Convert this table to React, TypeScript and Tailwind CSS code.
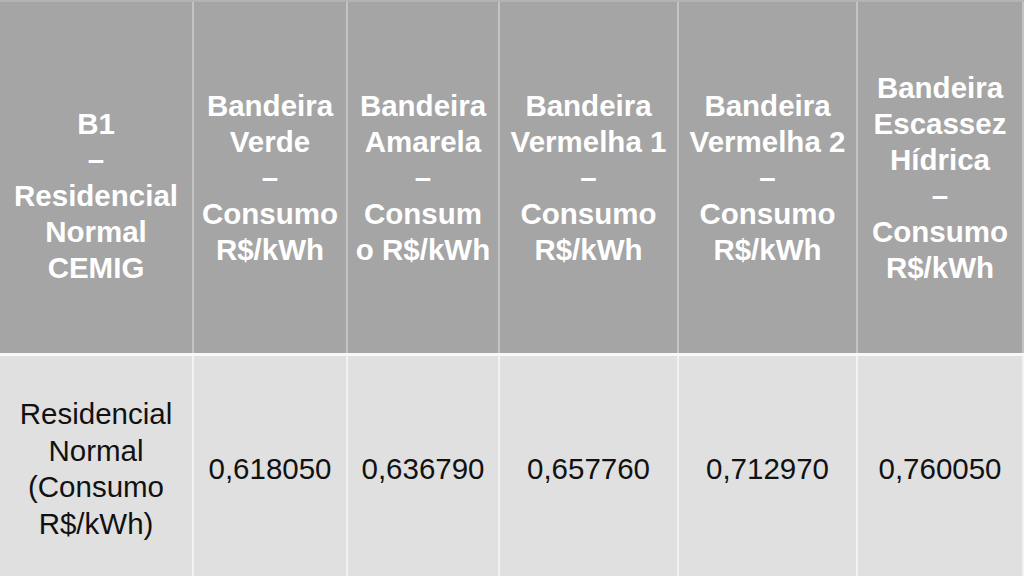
import React from 'react';

const headers: { w: string; lines: string[] }[] = [
  { w: 'w-[192px]', lines: ['\u00a0', 'B1', '–', 'Residencial', 'Normal', 'CEMIG'] },
  { w: 'w-[154px]', lines: ['Bandeira', 'Verde', '–', 'Consumo', 'R$/kWh'] },
  { w: 'w-[152px]', lines: ['Bandeira', 'Amarela', '–', 'Consum', 'o R$/kWh'] },
  { w: 'w-[179px]', lines: ['Bandeira', 'Vermelha 1', '–', 'Consumo', 'R$/kWh'] },
  { w: 'w-[179px]', lines: ['Bandeira', 'Vermelha 2', '–', 'Consumo', 'R$/kWh'] },
  { w: 'w-[166px]', lines: ['Bandeira', 'Escassez', 'Hídrica', '–', 'Consumo', 'R$/kWh'] },
];

const values = ['0,618050', '0,636790', '0,657760', '0,712970', '0,760050'];

export default function App() {
  return (
    <div
      className="w-[1024px] h-[576px] overflow-hidden bg-[#e0e0e0] flex flex-col"
      style={{ fontFamily: '"Liberation Sans", Arial, sans-serif' }}
    >
      <div className="h-[353px] flex bg-[#a5a5a5] border-t-2 border-[#b4b4b4]">
        {headers.map((h, i) => (
          <div
            key={i}
            className={`${h.w} shrink-0 flex flex-col items-center justify-center text-white font-bold text-[29.5px] leading-[36px] whitespace-nowrap ${
              i > 0 ? 'border-l-2 border-[#c4c4c4]' : ''
            }`}
          >
            {h.lines.map((l, j) => (
              <div key={j}>{l}</div>
            ))}
          </div>
        ))}
        <div className="flex-1 border-l-2 border-[#c4c4c4]" />
      </div>
      <div className="h-[3px] bg-[#f8f8f8]" />
      <div className="flex-1 flex bg-[#e0e0e0] text-[#111] text-[29.5px] leading-[36.5px]">
        <div className="w-[192px] shrink-0 flex flex-col items-center justify-center pt-[6px] whitespace-nowrap">
          <div>Residencial</div>
          <div>Normal</div>
          <div>(Consumo</div>
          <div>R$/kWh)</div>
        </div>
        {values.map((v, i) => (
          <div
            key={v}
            className={`${headers[i + 1].w} shrink-0 flex items-center justify-center pt-[6px] border-l-2 border-[#f2f2f2] whitespace-nowrap`}
          >
            {v}
          </div>
        ))}
        <div className="flex-1 border-l-2 border-[#f2f2f2]" />
      </div>
    </div>
  );
}
